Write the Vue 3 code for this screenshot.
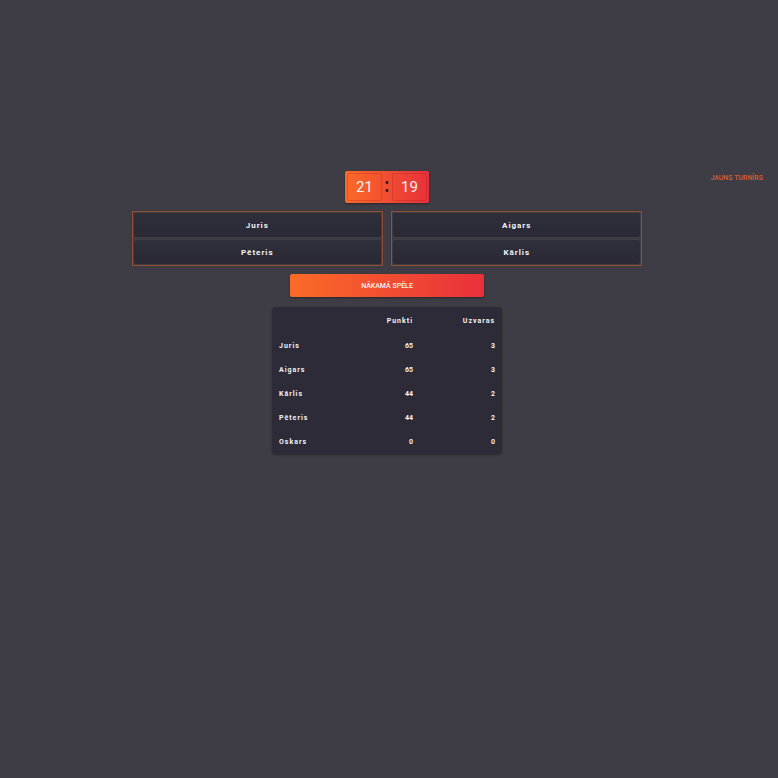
<script setup>
import { ref } from 'vue'

const score = ref([21, 19])
const teams = ref([
  ['Juris', 'Pēteris'],
  ['Aigars', 'Kārlis'],
])
const standings = ref([
  { name: 'Juris', points: 65, wins: 3 },
  { name: 'Aigars', points: 65, wins: 3 },
  { name: 'Kārlis', points: 44, wins: 2 },
  { name: 'Pēteris', points: 44, wins: 2 },
  { name: 'Oskars', points: 0, wins: 0 },
])
</script>

<template>
  <main class="page">
    <header class="top">
      <div class="score">
        <button type="button" class="digit">{{ score[0] }}</button>
        <svg class="colon" viewBox="0 0 4 14" aria-hidden="true">
          <circle cx="2" cy="2.5" r="1.4" />
          <circle cx="2" cy="10.5" r="1.4" />
        </svg>
        <button type="button" class="digit">{{ score[1] }}</button>
      </div>
      <button type="button" class="reset">Jauns turnīrs</button>
    </header>

    <section class="teams">
      <div v-for="(team, i) in teams" :key="i" class="team">
        <div v-for="player in team" :key="player" class="player">{{ player }}</div>
      </div>
    </section>

    <button type="button" class="next">Nākamā spēle</button>

    <div class="board">
      <table>
        <thead>
          <tr>
            <th></th>
            <th scope="col">Punkti</th>
            <th scope="col">Uzvaras</th>
          </tr>
        </thead>
        <tbody>
          <tr v-for="row in standings" :key="row.name">
            <th scope="row">{{ row.name }}</th>
            <td>{{ row.points }}</td>
            <td>{{ row.wins }}</td>
          </tr>
        </tbody>
      </table>
    </div>
  </main>
</template>

<style>
body {
  background: #3e3c44;
}
</style>

<style scoped>
.page {
  box-sizing: border-box;
  min-height: 100vh;
  padding: 22vh 4px 0 0;
  display: flex;
  flex-direction: column;
  align-items: center;
  background: #3e3c44;
  color: #f4f4f6;
  font-family: Roboto, sans-serif;
}
button {
  margin: 0;
  border: 0;
  padding: 0;
  background: none;
  color: inherit;
  font-family: inherit;
  cursor: pointer;
}
.top {
  width: 100%;
  display: grid;
  grid-template-columns: 1fr auto 1fr;
  align-items: start;
}
.score {
  grid-column: 2;
  display: flex;
  align-items: center;
  gap: 3px;
  padding: 2px;
  border-radius: 2px;
  background: linear-gradient(90deg, #fb6b27, #e9303b);
  box-shadow: 0 1px 2px rgba(0, 0, 0, 0.35);
}
.digit {
  box-sizing: border-box;
  width: 35px;
  height: 28px;
  border: 1px solid rgba(120, 20, 20, 0.2);
  border-radius: 2px;
  font-size: 15px;
  line-height: 26px;
  text-align: center;
}
.colon {
  width: 4px;
  height: 14px;
  fill: #1c1416;
}
.reset {
  justify-self: end;
  padding: 0 11px;
  color: #d9602f;
  font-size: 7px;
  font-weight: 500;
  line-height: 14px;
  text-transform: uppercase;
}
.teams {
  width: 66%;
  margin-top: 8px;
  display: grid;
  grid-template-columns: 1fr 1fr;
  gap: 8px;
}
.team {
  display: grid;
  gap: 3px;
  padding: 1px;
  border: 1px solid #96502f;
  box-shadow: 0 0 1px rgba(0, 0, 0, 0.3);
}
.player {
  padding-top: 2px;
  border-radius: 2px;
  background: linear-gradient(#2f2e3b, #2a2935);
  font-size: 8px;
  font-weight: 700;
  line-height: 22px;
  letter-spacing: 1px;
  text-align: center;
}
.next {
  width: 25%;
  margin-top: 8px;
  padding-top: 1px;
  border-radius: 2px;
  background: linear-gradient(90deg, #fb6b27, #e9303b);
  box-shadow: 0 1px 2px rgba(0, 0, 0, 0.35);
  font-size: 7px;
  font-weight: 500;
  line-height: 22px;
  text-transform: uppercase;
}
.board {
  box-sizing: border-box;
  width: 230px;
  margin-top: 10px;
  padding-top: 1px;
  border-radius: 4px;
  background: #2c2b37;
  box-shadow: 0 1px 2px rgba(0, 0, 0, 0.3);
}
table {
  width: 100%;
  table-layout: fixed;
  border-collapse: collapse;
  font-size: 7px;
  font-weight: 700;
  line-height: 24px;
  letter-spacing: 1px;
}
th,
td {
  padding: 0 7px;
  text-align: right;
}
thead th {
  line-height: 26px;
}
td {
  letter-spacing: 0;
}
tbody th {
  text-align: left;
}
th:nth-child(1) {
  width: 52px;
}
</style>
